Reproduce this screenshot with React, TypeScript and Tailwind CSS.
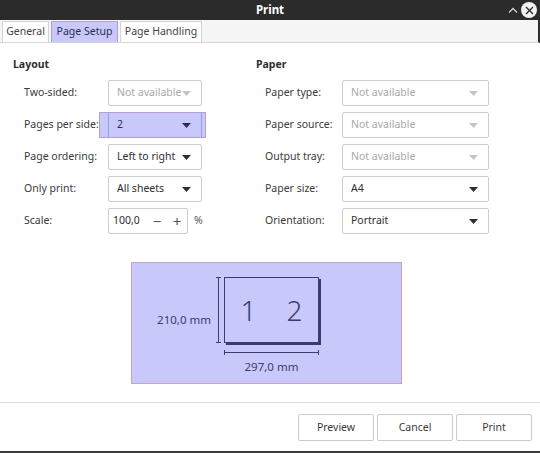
import React from 'react';

const Combo: React.FC<{ value: string; disabled?: boolean; width: string }> = ({ value, disabled, width }) => (
  <div
    className={`${width} h-[26px] flex items-center justify-between pl-[8px] pr-[10px] bg-white border border-[#cdcdcd] rounded-[2px] ${
      disabled ? 'text-[#a8a8a8]' : 'text-[#2e2e2e]'
    }`}
  >
    <span>{value}</span>
    <svg width="9" height="5" viewBox="0 0 9 5">
      <path d="M0 0h9L4.5 5z" fill={disabled ? '#c4c4c4' : '#2e2e2e'} />
    </svg>
  </div>
);

const Row: React.FC<{ label: string; labelW: string; children: React.ReactNode }> = ({ label, labelW, children }) => (
  <div className="flex items-center h-[32px]">
    <span className={`${labelW} shrink-0 text-[#3a3a3a]`}>{label}</span>
    {children}
  </div>
);

const Button: React.FC<{ label: string }> = ({ label }) => (
  <button className="w-[76px] h-[27px] bg-white border border-[#cbcbcb] rounded-[2px] text-[#3a3a3a]">{label}</button>
);

const App: React.FC = () => {
  return (
    <div className="w-[540px] h-[453px] bg-white flex flex-col overflow-hidden whitespace-nowrap text-[10.5px] font-['Noto_Sans',sans-serif]">
      {/* title bar */}
      <div className="h-[20px] shrink-0 bg-[#2b2b2b] flex items-center relative">
        <span className="flex-1 text-center text-white font-bold text-[11.5px]">Print</span>
        <div className="absolute right-[3px] top-[2px] flex items-center gap-[3px]">
          <svg width="10" height="8" viewBox="0 0 10 8">
            <path d="M1 6.5L5 2.5L9 6.5" stroke="#d0d0d0" strokeWidth="1.3" fill="none" />
          </svg>
          <div className="w-[16px] h-[16px] rounded-full bg-[#f2f2f2] flex items-center justify-center">
            <svg width="9" height="9" viewBox="0 0 9 9">
              <path d="M1 1L8 8M8 1L1 8" stroke="#2b2b2b" strokeWidth="1.4" />
            </svg>
          </div>
        </div>
      </div>

      {/* tabs */}
      <div className="h-[23px] shrink-0 bg-[#f5f5f5] border-b border-[#d6d6d6] flex items-end pl-[2px] gap-[2px] border-r-2 border-r-[#2b2b2b]">
        <div className="h-[21px] w-[47px] justify-center flex items-center bg-white border border-b-0 border-[#d4d4d4] text-[#444]">General</div>
        <div className="h-[21px] w-[67px] justify-center flex items-center bg-[#c8c8fa] border border-b-0 border-[#b49fd0] text-[#2e2e50]">Page Setup</div>
        <div className="h-[21px] w-[82px] justify-center flex items-center bg-white border border-b-0 border-[#d4d4d4] text-[#444]">Page Handling</div>
      </div>

      {/* body */}
      <div className="flex-1 flex flex-col">
        <div className="flex pt-[13px]">
          {/* layout column */}
          <div className="w-[256px] pl-[13px] flex flex-col">
            <div className="font-bold text-[#2e2e2e] h-[16px] leading-[16px]">Layout</div>
            <div className="pl-[11px] pt-[5px] flex flex-col">
              <Row label="Two-sided:" labelW="w-[84px]">
                <Combo value="Not available" disabled width="w-[94px]" />
              </Row>
              <div className="flex items-center h-[32px] relative">
                <div className="absolute left-[75px] top-[3px] w-[107px] h-[26px] bg-[#c8c8fa] border border-[#b49fd0]" />
                <span className="w-[84px] shrink-0 text-[#3a3a3a] relative">Pages per side:</span>
                <div className="w-[94px] h-[26px] flex items-center justify-between pl-[8px] pr-[10px] border-x border-[#9c9cd8] text-[#2e2e50] relative">
                  <span>2</span>
                  <svg width="9" height="5" viewBox="0 0 9 5">
                    <path d="M0 0h9L4.5 5z" fill="#2e2e50" />
                  </svg>
                </div>
              </div>
              <Row label="Page ordering:" labelW="w-[84px]">
                <Combo value="Left to right" width="w-[94px]" />
              </Row>
              <Row label="Only print:" labelW="w-[84px]">
                <Combo value="All sheets" width="w-[94px]" />
              </Row>
              <Row label="Scale:" labelW="w-[84px]">
                <div className="w-[80px] h-[26px] flex items-center bg-white border border-[#cdcdcd] rounded-[2px] pl-[4px] text-[#2e2e2e]">
                  <span className="flex-1">100,0</span>
                  <span className="w-[20px] text-center text-[#555] text-[15px]">−</span>
                  <span className="w-[20px] text-center text-[#555] text-[15px]">+</span>
                </div>
                <span className="ml-[6px] text-[#555]">%</span>
              </Row>
            </div>
          </div>

          {/* paper column */}
          <div className="flex flex-col">
            <div className="font-bold text-[#2e2e2e] h-[16px] leading-[16px]">Paper</div>
            <div className="pl-[9px] pt-[5px] flex flex-col">
              <Row label="Paper type:" labelW="w-[77px]">
                <Combo value="Not available" disabled width="w-[147px]" />
              </Row>
              <Row label="Paper source:" labelW="w-[77px]">
                <Combo value="Not available" disabled width="w-[147px]" />
              </Row>
              <Row label="Output tray:" labelW="w-[77px]">
                <Combo value="Not available" disabled width="w-[147px]" />
              </Row>
              <Row label="Paper size:" labelW="w-[77px]">
                <Combo value="A4" width="w-[147px]" />
              </Row>
              <Row label="Orientation:" labelW="w-[77px]">
                <Combo value="Portrait" width="w-[147px]" />
              </Row>
            </div>
          </div>
        </div>

        {/* preview */}
        <div className="ml-[131px] mt-[25px] w-[271px] h-[122px] bg-[#c8c8fa] border border-[#c6a3c6] flex text-[#3c3c6c] text-[11.5px]">
          <div className="w-[82px] pt-[48px] text-right pr-[3px]">210,0 mm</div>
          <div className="flex flex-col pt-[14px] ml-[2px]">
            <div className="flex">
              <div className="w-[5px] h-[66px] flex flex-col items-center justify-between mr-[3px]">
                <div className="w-[5px] h-px bg-[#3c3c6c]" />
                <div className="w-px flex-1 bg-[#3c3c6c]" />
                <div className="w-[5px] h-px bg-[#3c3c6c]" />
              </div>
              <div className="w-[95px] h-[66px] border border-[#3c3c6c] shadow-[2px_2px_0_#3c3c6c] flex items-center justify-center gap-[30px] text-[28px] font-light leading-none text-[#3c3c6c]">
                <span>1</span>
                <span>2</span>
              </div>
            </div>
            <div className="ml-[8px] w-[95px] mt-[7px] h-[5px] flex items-center">
              <div className="w-px h-[5px] bg-[#3c3c6c]" />
              <div className="flex-1 h-px bg-[#3c3c6c]" />
              <div className="w-px h-[5px] bg-[#3c3c6c]" />
            </div>
            <div className="ml-[8px] w-[95px] text-center mt-[3px]">297,0 mm</div>
          </div>
        </div>

        <div className="flex-1" />
        <div className="border-t border-[#dcdcdc] h-[49px] flex items-center justify-end gap-[3px] pr-[8px] pt-[1px]">
          <Button label="Preview" />
          <Button label="Cancel" />
          <Button label="Print" />
        </div>
        <div className="h-[2px] bg-[#3a3a3a]" />
      </div>
    </div>
  );
};

export default App;
